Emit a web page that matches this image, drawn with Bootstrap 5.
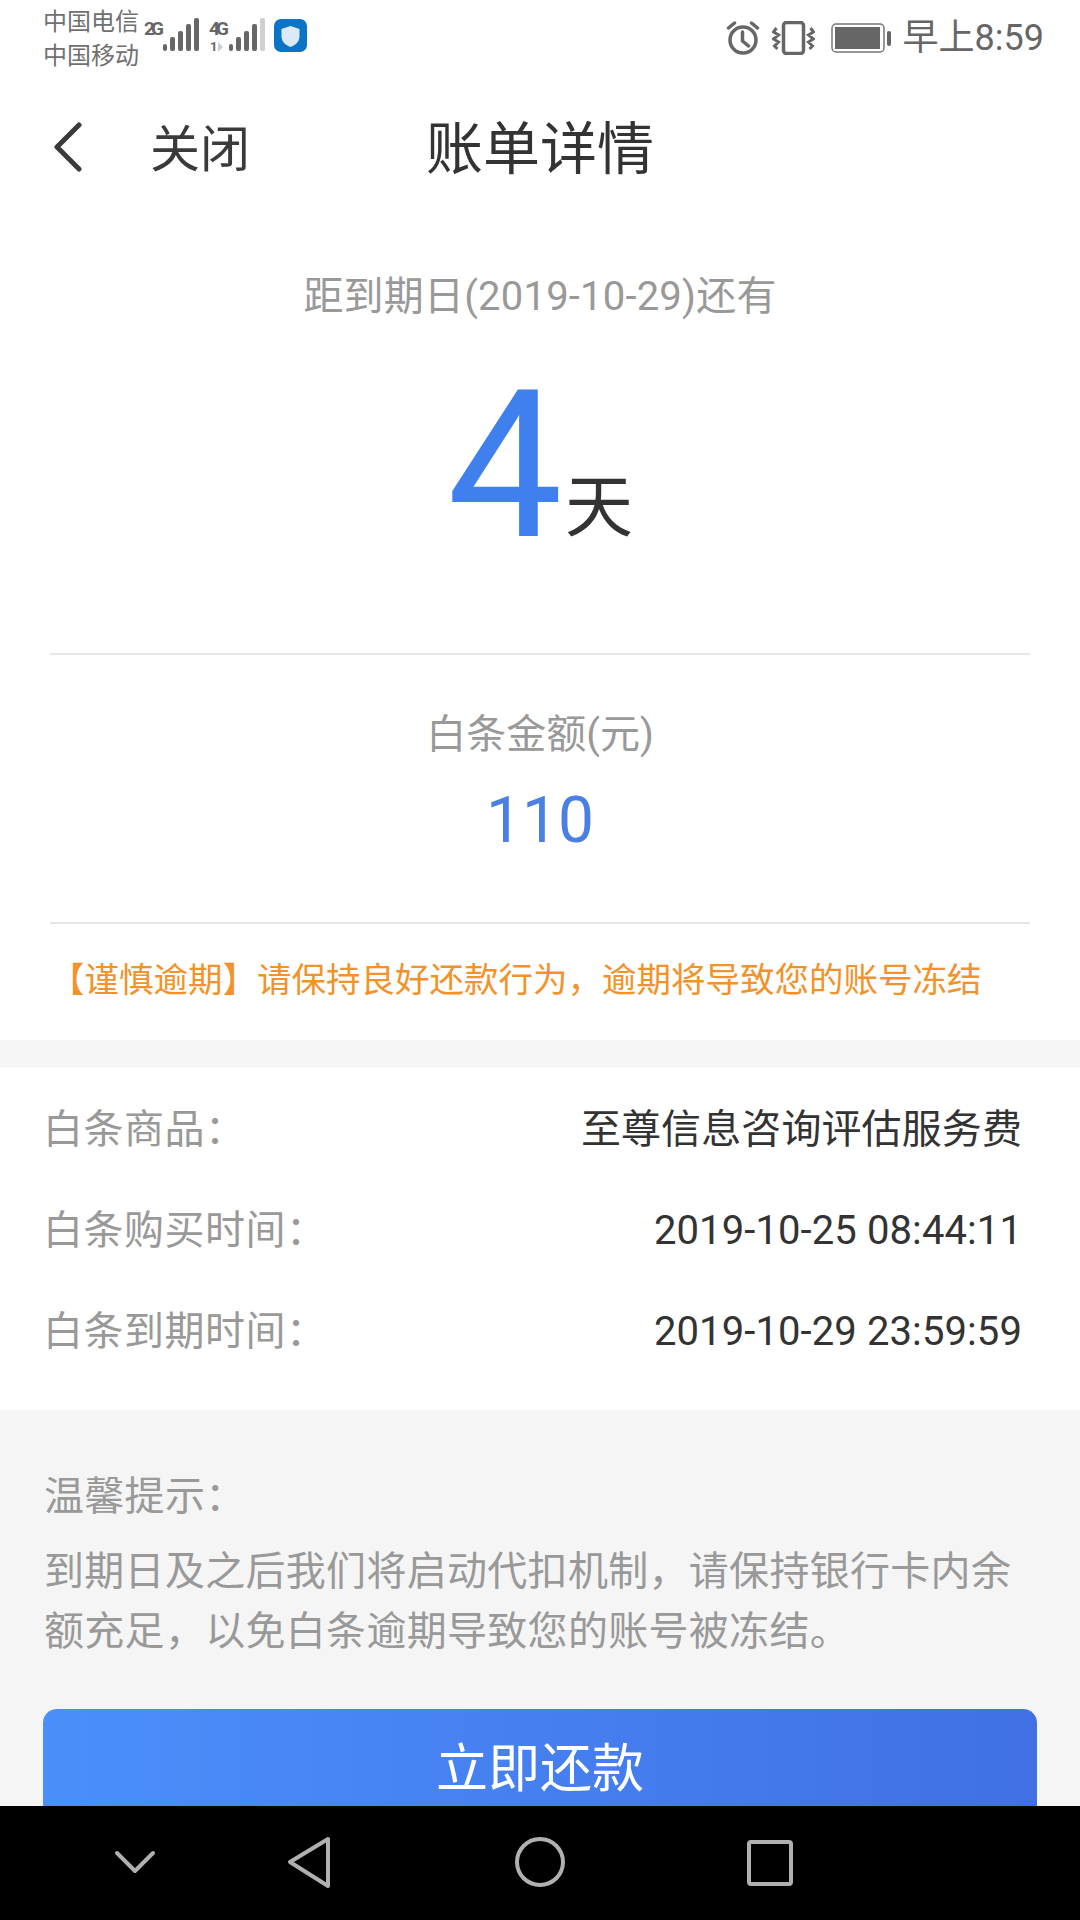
<!doctype html>
<html lang="zh"><head><meta charset="utf-8"><title>账单详情</title>
<link href="https://cdn.jsdelivr.net/npm/bootstrap@5.3.0/dist/css/bootstrap.min.css" rel="stylesheet">
<style>
html,body{margin:0;background:#fff}
body{font-family:Roboto,"Noto Sans CJK SC",sans-serif;color:#333}
.phone{width:1080px;height:1920px;overflow:hidden}
.screen{flex:1 1 auto;min-height:0;overflow:hidden;background:#f5f5f5}
.screen>*{flex-shrink:0}
.status{height:76px;padding:0 36px 0 43px;color:#666}
.carrier{font-size:24px;line-height:34px;padding-top:2px;width:101px;color:#707070}
.clock{font-size:36px;line-height:40px;color:#666;margin-left:12px}
.head{height:148px;padding-left:53px}
.head-back{margin-bottom:7px}
.head-close{font-size:50px;line-height:60px;margin-left:67px;color:#3a3a3a}
.head-title{font-size:57px;line-height:60px;margin-left:176px;color:#333}
.hero{background:#fff;padding:48px 50px 0;height:816px}
.due{font-size:40px;line-height:50px;color:#999;letter-spacing:.2px}
.count{height:331px;padding-bottom:102px}
.big{font-size:206px;line-height:170px;color:#4080ee;font-weight:400}
.unit{font-size:68px;line-height:72px;color:#333;margin:0 0 7px 2px}
.rule{height:2px;background:#e6e6e6}
.amt-label{font-size:40px;line-height:50px;color:#999;margin-top:55px}
.amt{font-size:64px;line-height:76px;color:#4a80e4;margin:23px 0 63px}
.warn{font-size:34.500px;line-height:50px;color:#f2922a;margin-top:31px;white-space:nowrap}
.info{background:#fff;margin-top:27px;height:343px;padding:33px 58px 0 43px}
.info-row{height:101px;font-size:40px;line-height:60px}
.info-k{color:#999;letter-spacing:.5px}
.info-v{color:#333;letter-spacing:.1px}
.tips{padding:57px 44px 0;font-size:40px;line-height:60px;color:#999;letter-spacing:.3px}
.tips p{margin:0}
.tips .tips-head{margin-bottom:15px}
.pay{width:994px;height:122px;margin:47px 0 0 43px;padding:0;border:0;border-radius:14px;background:linear-gradient(90deg,#4b8ffb,#4070e4);color:#fff;font-size:52px;line-height:60px;display:block;text-align:center}
.softkeys{height:114px;flex:0 0 114px;background:#000}
</style></head>
<body>
<div class="phone d-flex flex-column">
  <div class="screen d-flex flex-column">
    <div class="bg-white">
      <div class="status d-flex align-items-center">
        <div class="carrier"><div>中国电信</div><div>中国移动</div></div>
        <svg width="163" height="40" viewBox="0 0 163 40" aria-hidden="true" fill="#666">
          <text x="0" y="17" font-family="Roboto" font-size="19" font-weight="700" textLength="20">2G</text>
          <rect x="19" y="26" width="4" height="7" rx="2"/><rect x="26" y="19" width="5" height="14" rx="2"/><rect x="34" y="13" width="5" height="20" rx="2"/><rect x="42" y="6" width="5" height="27" rx="2"/><rect x="50" y="0" width="5" height="33" rx="2"/>
          <text x="65" y="17" font-family="Roboto" font-size="19" font-weight="700" textLength="20">4G</text>
          <text x="66" y="33" font-family="Roboto" font-size="13" font-weight="700">1</text><path d="M74 24l5 5-5 5z" fill="#ccc"/>
          <rect x="85" y="26" width="4" height="7" rx="2"/><rect x="92" y="19" width="5" height="14" rx="2"/><rect x="100" y="13" width="5" height="20" rx="2"/><rect x="108" y="6" width="5" height="27" rx="2"/><rect x="116" y="0" width="5" height="33" rx="2" fill="#d0d0d0"/>
          <rect x="130" y="1" width="33" height="33" rx="7" fill="#0a74c6"/>
          <path d="M146.500 8l9 3v7c0 6-4 9-9 11-5-2-9-5-9-11v-7z" fill="#dbeaf7"/>
        </svg>
        <div class="ms-auto d-flex align-items-center">
          <svg width="34" height="34" viewBox="0 0 33 34" fill="none" stroke="#666" stroke-width="3.500" class="me-2" aria-hidden="true"><circle cx="16.500" cy="19" r="13"/><path d="M16 11v9l6 5M2 7l6-5M31 7l-6-5" stroke-linecap="round"/></svg>
          <svg width="43" height="34" viewBox="0 0 42 34" fill="none" stroke="#666" class="ms-1" aria-hidden="true"><rect x="11" y="1.500" width="20" height="31" rx="3" stroke-width="3.500"/><path d="M4 7L1 11l5 3-5 4 5 3-4 4 3 3M38 7l3 4-5 3 5 4-5 3 4 4-3 3" stroke-width="3"/></svg>
          <svg width="60" height="30" viewBox="0 0 60 30" class="ms-3" aria-hidden="true"><rect x="1" y="1" width="52" height="28" rx="4" fill="none" stroke="#777" stroke-width="1.500"/><rect x="4" y="4" width="45" height="22" fill="#666"/><rect x="56" y="8" width="4" height="15" rx="2" fill="#666"/></svg>
          <div class="clock">早上8:59</div>
        </div>
      </div>
      <div class="head d-flex align-items-center">
        <svg class="head-back" width="30" height="50" viewBox="0 0 30 50" fill="none" stroke="#3a3a3a" stroke-width="5" stroke-linecap="round" stroke-linejoin="round" aria-hidden="true"><path d="M26 3L4 25l22 22"/></svg>
        <div class="head-close">关闭</div>
        <div class="head-title">账单详情</div>
      </div>
      <div class="hero">
        <div class="due text-center">距到期日(2019-10-29)还有</div>
        <div class="count d-flex justify-content-center align-items-end">
          <span class="big">4</span><span class="unit">天</span>
        </div>
        <div class="rule"></div>
        <div class="amt-label text-center">白条金额(元)</div>
        <div class="amt text-center">110</div>
        <div class="rule"></div>
        <div class="warn">【谨慎逾期】请保持良好还款行为，逾期将导致您的账号冻结</div>
      </div>
    </div>
    <div class="info">
      <div class="info-row d-flex justify-content-between"><span class="info-k">白条商品：</span><span class="info-v">至尊信息咨询评估服务费</span></div>
      <div class="info-row d-flex justify-content-between"><span class="info-k">白条购买时间：</span><span class="info-v">2019-10-25 08:44:11</span></div>
      <div class="info-row d-flex justify-content-between"><span class="info-k">白条到期时间：</span><span class="info-v">2019-10-29 23:59:59</span></div>
    </div>
    <div class="tips">
      <p class="tips-head">温馨提示：</p>
      <p>到期日及之后我们将启动代扣机制，请保持银行卡内余额充足，以免白条逾期导致您的账号被冻结。</p>
    </div>
    <button type="button" class="btn pay">立即还款</button>
  </div>
  <div class="softkeys d-flex" aria-hidden="true">
    <svg width="1080" height="114" viewBox="0 0 1080 114" fill="none" stroke="#b0b0b0" stroke-width="4" stroke-linejoin="round" stroke-linecap="round">
      <path d="M117 47l18 18 18-18"/>
      <path d="M328 33L290 56l38 24z"/>
      <circle cx="540" cy="56" r="23"/>
      <rect x="749" y="36" width="42" height="42" rx="2"/>
    </svg>
  </div>
</div>
</body></html>
